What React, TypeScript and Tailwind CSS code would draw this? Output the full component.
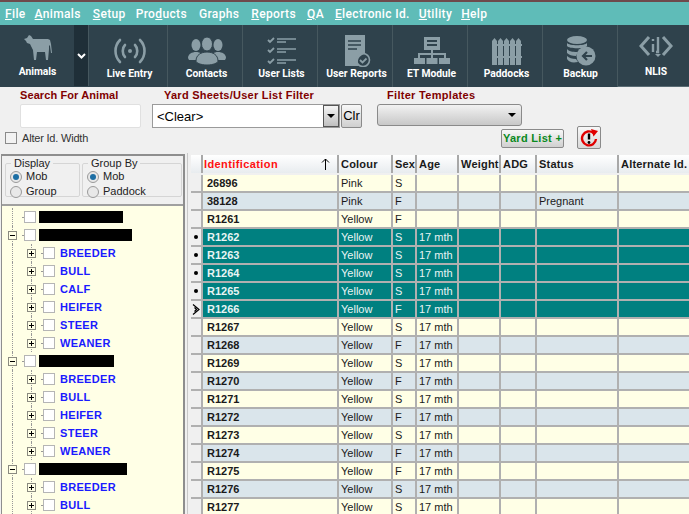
import React from "react";

const ICON = "#8b9ea6";

const Cow = () => (
  <svg width="28" height="25" viewBox="0 0 28 25" fill={ICON}>
    <path d="M0 4L3 3 5 0 7 1 9 4 24 4 26 5 27 9 28 18 27 18 26 11 25 10 25 14 24 25 22 25 21 17 13 17 12 25 10 25 9 15 6 9 3 8 2 6z" />
  </svg>
);
const Live = () => (
  <svg width="34" height="26" viewBox="0 0 34 26" fill="none" stroke={ICON} strokeWidth="2.6" strokeLinecap="round">
    <path d="M7 2C1 8 1 18 7 24" />
    <path d="M12 7C9 10 9 16 12 19" />
    <path d="M22 7C25 10 25 16 22 19" />
    <path d="M27 2C33 8 33 18 27 24" />
    <circle cx="17" cy="13" r="2" fill={ICON} stroke="none" />
  </svg>
);
const Contacts = () => (
  <svg width="38" height="28" viewBox="0 0 38 28" fill={ICON}>
    <ellipse cx="8" cy="8" rx="4.5" ry="6" />
    <ellipse cx="30" cy="8" rx="4.5" ry="6" />
    <path d="M0 21c0-4 4-6 8-6s7 2 7 6v2H1z" />
    <path d="M23 21c0-4 3-6 7-6s8 2 8 6l-1 2H24z" />
    <ellipse cx="19" cy="7" rx="5.5" ry="7" stroke="#2f424c" strokeWidth="1" />
    <path d="M8 24c0-6 5-9 11-9s11 3 11 9c0 2-5 4-11 4S8 26 8 24z" stroke="#2f424c" strokeWidth="1" />
  </svg>
);
const Lists = () => (
  <svg width="30" height="28" viewBox="0 0 30 28" fill="none" stroke={ICON} strokeWidth="1.6">
    <path d="M1 3l2 2 4-4M1 13l2 2 4-4M1 24l2 2 4-4" strokeWidth="1.8" />
    <path d="M10 2h19M10 5h9M10 12h19M10 15h9M10 23h19M10 26h9" />
  </svg>
);
const Reports = () => (
  <svg width="28" height="32" viewBox="0 0 28 32">
    <path d="M2 0h20v19a8 8 0 0 0-6 12H2z" fill={ICON} />
    <path d="M5 6h13M5 10h13M5 14h9" stroke="#2f424c" strokeWidth="1.5" />
    <circle cx="20" cy="25" r="6.5" fill="none" stroke={ICON} strokeWidth="1.6" />
    <path d="M17 25l2.5 2.5 4-4" fill="none" stroke={ICON} strokeWidth="1.8" />
  </svg>
);
const Et = () => (
  <svg width="36" height="28" viewBox="0 0 36 28" fill={ICON}>
    <path fillRule="evenodd" d="M10 0h16v13H10zM13 3v2h10V3zM13 7v2h10V7z" />
    <path d="M17 13h2v3h13v5h-2v-3H19v3h-2v-3H6v3H4v-5h13z" />
    <rect x="0" y="21" width="11" height="6" />
    <rect x="12.5" y="21" width="11" height="6" />
    <rect x="25" y="21" width="11" height="6" />
  </svg>
);
const Paddocks = () => (
  <svg width="30" height="28" viewBox="0 0 30 28" fill={ICON}>
    {[0, 6, 12, 18, 24].map((x) => (
      <path key={x} d={`M${x} 4l2.5-3 2.5 3v24h-5z`} />
    ))}
    <rect x="0" y="7" width="30" height="2" />
    <rect x="0" y="19" width="30" height="2" />
  </svg>
);
const Backup = () => (
  <svg width="30" height="30" viewBox="0 0 30 30">
    <ellipse cx="11" cy="4" rx="10" ry="4" fill={ICON} />
    <path d="M1 7c2 3 18 3 20 0v3c-2 3-18 3-20 0zM1 13c2 3 8 3 11 3l-2 4c-4 0-7-1-9-3zM1 20c2 2 5 3 9 3l2 3c-6 1-9 0-11-3z" fill={ICON} />
    <circle cx="20" cy="20" r="9.5" fill={ICON} />
    <path d="M26 20h-9M21 16l-4 4 4 4" fill="none" stroke="#2f424c" strokeWidth="2.2" />
  </svg>
);
const Nlis = () => (
  <svg width="34" height="24" viewBox="0 0 34 24" fill="none" stroke={ICON} strokeWidth="3">
    <path d="M10 3L2 12l8 9M24 3l8 9-8 9" />
    <path d="M14 10v8M14 5v2" strokeWidth="2.4" />
    <path d="M19 3v15h-2" strokeWidth="2.4" />
    <path d="M16 20h6l-3 3z" fill={ICON} stroke="none" />
  </svg>
);

const menu: [string, string, string, string][] = [
  ["", "F", "ile", ""],
  ["", "A", "nimals", "ml-[9px]"],
  ["", "S", "etup", "ml-[12px]"],
  ["Pro", "d", "ucts", "ml-[10px]"],
  ["Graphs", "", "", "ml-[12px]"],
  ["", "R", "eports", "ml-[12px]"],
  ["", "Q", "A", "ml-[11px]"],
  ["", "E", "lectronic Id.", "ml-[11px]"],
  ["", "U", "tility", "ml-[9px]"],
  ["", "H", "elp", "ml-[9px]"],
];

const tools: [string, React.ReactNode, string][] = [
  ["Live Entry", <Live />, "w-[79px] pl-[3px]"],
  ["Contacts", <Contacts />, "w-[75px] pl-[3px]"],
  ["User Lists", <Lists />, "w-[75px] pl-[3px]"],
  ["User Reports", <Reports />, "w-[75px] pl-[3px]"],
  ["ET Module", <Et />, "w-[75px] pl-[3px]"],
  ["Paddocks", <Paddocks />, "w-[75px] pl-[3px]"],
  ["Backup", <Backup />, "w-[75px] pl-[1px]"],
];

const Box = () => <div className="w-[12px] h-[12px] shrink-0 bg-white border border-[#b5b5b5]" />;

const Expander = ({ open }: { open?: boolean }) => (
  <div className="w-[9px] h-[9px] shrink-0 border border-[#8a8a80] bg-[#ffffe6] flex items-center justify-center relative">
    <div className="w-[5px] h-px bg-black" />
    {!open && <div className="absolute w-px h-[5px] bg-black" />}
  </div>
);

const Guide = ({ w, children, end }: { w: string; children?: React.ReactNode; end?: boolean }) => (
  <div className={`${w} h-full shrink-0 flex flex-col items-center justify-center relative`}>
    <div className={`absolute top-0 ${end ? "h-1/2" : "h-full"} border-l border-dotted border-[#999]`} />
    {children && <div className="relative">{children}</div>}
  </div>
);

const Root = ({ w, open, expand }: { w: string; open?: boolean; expand?: boolean }) => (
  <div className="h-[18px] flex items-center">
    <Guide w="w-[19px]">{expand && <Expander open={open} />}</Guide>
    <div className="w-[2px] border-t border-dotted border-[#999]" />
    <Box />
    <div className={`ml-[3px] h-[12px] bg-black ${w}`} />
  </div>
);

const Child = ({ name }: { name: string }) => (
  <div className="h-[18px] flex items-center">
    <Guide w="w-[19px]" />
    <Guide w="w-[19px]">
      <Expander />
    </Guide>
    <div className="w-[2px] border-t border-dotted border-[#999]" />
    <Box />
    <span className="ml-[5px] font-['Liberation_Sans',sans-serif] text-[11px] font-bold tracking-[0.3px] text-[#1a1aff]">{name}</span>
  </div>
);

const Radio = ({ on, label }: { on?: boolean; label: string }) => (
  <div className="flex items-center gap-[4px] h-[15px]">
    <div className="w-[12px] h-[12px] rounded-full border border-[#9a9a9a] bg-[#e8e8e8] flex items-center justify-center">
      {on && <div className="w-[6px] h-[6px] rounded-full bg-[#1c6ea4]" />}
    </div>
    <span className="text-[11px] text-[#222]">{label}</span>
  </div>
);

const Fieldset = ({ title, w, children }: { title: string; w: string; children: React.ReactNode }) => (
  <fieldset className={`${w} h-[39px] border border-[#d5d5d5] rounded-[2px] pl-[4px] mt-[-1px]`}>
    <legend className="text-[11px] leading-[11px] px-[3px] ml-[1px] text-[#222]">{title}</legend>
    {children}
  </fieldset>
);

const cols = [
  { name: "Identification", w: "w-[136px]" },
  { name: "Colour", w: "w-[54px]" },
  { name: "Sex", w: "w-[24px]" },
  { name: "Age", w: "w-[42px]" },
  { name: "Weight", w: "w-[42px]" },
  { name: "ADG", w: "w-[36px]" },
  { name: "Status", w: "w-[82px]" },
  { name: "Alternate Id.", w: "w-[73px]" },
];

const rows: [string, string, string, string, string, string][] = [
  ["26896", "Pink", "S", "", "", ""],
  ["38128", "Pink", "F", "", "Pregnant", ""],
  ["R1261", "Yellow", "F", "", "", ""],
  ["R1262", "Yellow", "S", "17 mth", "", "sel"],
  ["R1263", "Yellow", "S", "17 mth", "", "sel"],
  ["R1264", "Yellow", "S", "17 mth", "", "sel"],
  ["R1265", "Yellow", "S", "17 mth", "", "sel"],
  ["R1266", "Yellow", "F", "17 mth", "", "cur"],
  ["R1267", "Yellow", "S", "17 mth", "", ""],
  ["R1268", "Yellow", "F", "17 mth", "", ""],
  ["R1269", "Yellow", "S", "17 mth", "", ""],
  ["R1270", "Yellow", "F", "17 mth", "", ""],
  ["R1271", "Yellow", "S", "17 mth", "", ""],
  ["R1272", "Yellow", "F", "17 mth", "", ""],
  ["R1273", "Yellow", "S", "17 mth", "", ""],
  ["R1274", "Yellow", "F", "17 mth", "", ""],
  ["R1275", "Yellow", "F", "17 mth", "", ""],
  ["R1276", "Yellow", "S", "17 mth", "", ""],
  ["R1277", "Yellow", "S", "17 mth", "", ""],
];

export default function App() {
  return (
    <div className="w-[689px] h-[514px] overflow-hidden bg-[#f0f0f0] font-['Liberation_Sans',sans-serif] flex flex-col">
      <div className="h-[2px] shrink-0 bg-[#6e4a4c]" />
      {/* menu */}
      <div className="h-[23px] shrink-0 bg-[#5fbcb8] flex items-center pl-[5px] font-['Roboto',sans-serif] text-[12px] font-medium tracking-[0.35px] text-white">
        {menu.map(([a, u, b, m], i) => (
          <span key={i} className={`whitespace-nowrap ${m}`}>
            {a}
            {u && <span className="underline">{u}</span>}
            {b}
          </span>
        ))}
      </div>
      {/* toolbar */}
      <div className="h-[62px] shrink-0 bg-[#2f424c] flex font-['Roboto',sans-serif] text-[10.3px] font-bold text-white">
        <div className="w-[74px] h-[61px] flex flex-col items-center pt-[10px] pl-[1px]">
          <div className="h-[30px]">
            <Cow />
          </div>
          <span className="mt-[-1px]">Animals</span>
        </div>
        <div className="w-[15px] h-[61px] bg-[#1f2f38] border-r border-[#46585f] flex items-center justify-center">
          <svg width="9" height="6" viewBox="0 0 9 6" fill="none" stroke="white" strokeWidth="2">
            <path d="M1 1l3.5 3.5L8 1" />
          </svg>
        </div>
        {tools.map(([label, icon, w]) => (
          <div key={label} className={`${w} h-full flex flex-col items-center border-r border-[#46585f] pt-[9px] whitespace-nowrap`}>
            <div className="h-[33px] flex items-center justify-center">{icon}</div>
            <span className="mt-[-1px]">{label}</span>
          </div>
        ))}
        <div className="w-[71px] h-[62px] flex flex-col items-center pt-[9px] pl-[5px] border-b border-[#5a6c74]">
          <div className="h-[31px] flex items-start justify-center">
            <Nlis />
          </div>
          <span className="mt-[-1px]">NLIS</span>
        </div>
      </div>
      {/* filter */}
      <div className="h-[66px] shrink-0 flex pt-[2px] text-[11px] font-bold text-[#800000]">
        <div className="w-[152px] pl-[20px] flex flex-col">
          <span className="leading-[13px] tracking-[0.1px]">Search For Animal</span>
          <div className="mt-[2px] w-[121px] h-[24px] bg-white border border-[#e0e0e0] rounded-[2px]" />
          <div className="mt-[2px] ml-[-15px] flex items-center gap-[5px] font-normal tracking-[-0.2px] text-[11px] text-[#333]">
            <div className="w-[12px] h-[12px] bg-[#f2f2f2] border border-[#8a8a8a]" />
            Alter Id. Width
          </div>
        </div>
        <div className="w-[225px] flex flex-col">
          <span className="leading-[13px] pl-[12px] tracking-[0.25px]">Yard Sheets/User List Filter</span>
          <div className="mt-[2px] flex items-start">
            <div className="w-[188px] h-[24px] bg-white border border-[#9a9a9a] flex items-center justify-between font-normal text-[13px] text-black pl-[4px]">
              <span className="mt-[1px]">&lt;Clear&gt;</span>
              <div className="w-[16px] h-[22px] bg-gradient-to-b from-[#f5f5f5] to-[#c0c0c0] border border-[#555] flex items-center justify-center">
                <div className="border-x-[4px] border-x-transparent border-t-[4px] border-t-black" />
              </div>
            </div>
            <div className="ml-[1px] w-[21px] h-[24px] bg-gradient-to-b from-[#f8f8f8] to-[#cfcfcf] border border-[#8a8a8a] rounded-[2px] flex items-center justify-center font-normal text-[13px] text-black">
              Clr
            </div>
          </div>
        </div>
        <div className="flex flex-col">
          <span className="leading-[13px] pl-[10px] tracking-[0.3px]">Filter Templates</span>
          <div className="mt-[2px] w-[145px] h-[22px] bg-gradient-to-b from-[#f2f2f2] to-[#c8c8c8] border border-[#8a8a8a] rounded-[3px] flex items-center justify-end pr-[5px]">
            <div className="border-x-[4px] border-x-transparent border-t-[4px] border-t-black" />
          </div>
          <div className="ml-[124px] flex items-start">
            <div className="w-[63px] h-[19px] mt-[3px] bg-gradient-to-b from-[#f8f8f8] to-[#d0d0d0] border border-[#8a8a8a] rounded-[2px] flex items-center justify-center text-[11px] tracking-[0.3px] text-[#0a8a1e] whitespace-nowrap">
              Yard List +
            </div>
            <div className="ml-[13px] w-[24px] h-[23px] bg-gradient-to-b from-[#f8f8f8] to-[#d8d8d8] border border-[#8a8a8a] rounded-[2px] flex items-center justify-center">
              <svg width="20" height="19" viewBox="0 0 20 19" fill="none">
                <path d="M14.5 5A7 7 0 1 0 17 11" stroke="#e00000" strokeWidth="2.4" />
                <path d="M12 1l7 2-4.5 5.5z" fill="#e00000" />
                <path d="M10 5.5v6" stroke="black" strokeWidth="2.4" />
                <circle cx="10" cy="14.5" r="1.4" fill="black" />
              </svg>
            </div>
          </div>
        </div>
      </div>
      {/* body */}
      <div className="flex-1 flex min-h-0">
        {/* left */}
        <div className="w-[184px] shrink-0 ml-px border-t-2 border-r-2 border-l border-[#8e8e8e] mt-[1px] flex flex-col text-[11px] font-normal">
          <div className="h-[50px] shrink-0 flex gap-[2px] pl-[3px] pt-[3px] border-b-2 border-[#a0a0a0]">
            <Fieldset title="Display" w="w-[75px]">
              <Radio on label="Mob" />
              <Radio label="Group" />
            </Fieldset>
            <Fieldset title="Group By" w="w-[100px]">
              <Radio on label="Mob" />
              <Radio label="Paddock" />
            </Fieldset>
          </div>
          <div className="flex-1 bg-[#ffffe6] pt-[2px] pl-px overflow-hidden">
            <Root w="w-[84px]" />
            <Root w="w-[93px]" expand open />
            {["BREEDER", "BULL", "CALF", "HEIFER", "STEER", "WEANER"].map((n) => (
              <Child key={n} name={n} />
            ))}
            <Root w="w-[75px]" expand open />
            {["BREEDER", "BULL", "HEIFER", "STEER", "WEANER"].map((n) => (
              <Child key={n} name={n} />
            ))}
            <Root w="w-[88px]" expand open />
            {["BREEDER", "BULL"].map((n) => (
              <Child key={n} name={n} />
            ))}
          </div>
        </div>
        {/* grid */}
        <div className="ml-[2px] w-[502px] shrink-0 pt-[2px] pl-[3px] border-l border-[#c8c8c8] overflow-hidden">
          <div className="flex h-[20px] bg-gradient-to-b from-white to-[#e8ecef] border-b-2 border-[#f0f0f0]">
            <div className="w-[12px] shrink-0 border-r-2 border-[#a8a8a8]" />
            {cols.map((c, i) => (
              <div
                key={c.name}
                className={`${c.w} shrink-0 border-r-2 border-[#a8a8a8] flex items-center justify-between whitespace-nowrap text-[11px] font-bold ${i === 0 ? "text-[#ff1010] pl-[1px] tracking-[0.4px]" : "text-[#1a1a1a] pl-[2px] tracking-[0.2px]"}`}
              >
                {c.name}
                {i === 0 && (
                  <svg width="9" height="12" viewBox="0 0 9 12" fill="none" stroke="black" className="mr-[7px]">
                    <path d="M4.5 12V1M1 4.5L4.5 1 8 4.5" />
                  </svg>
                )}
              </div>
            ))}
          </div>
          {rows.map((r, i) => {
            const sel = r[5] !== "";
            const bg = sel ? "bg-[#008080] text-[#e8f4f4]" : i % 2 ? "bg-[#dae5eb] text-[#1a1a1a]" : "bg-[#ffffe6] text-[#1a1a1a]";
            const vals = [r[0], r[1], r[2], r[3], "", "", r[4], ""];
            return (
              <div key={r[0]} className="flex h-[18px]">
                <div className="w-[12px] shrink-0 border-r-2 border-b-2 border-[#b0b0b0] bg-[#f0f0f0] flex items-center justify-center">
                  {r[5] === "sel" && <div className="w-[4px] h-[4px] rounded-full bg-black" />}
                  {r[5] === "cur" && (
                    <svg width="9" height="11" viewBox="0 0 9 11" fill="none" stroke="black" strokeWidth="1.2">
                      <path d="M1 .5L7 5.5 1 10.5M2.5 3.5L4.5 5.5 2.5 7.5" />
                    </svg>
                  )}
                </div>
                {cols.map((c, j) => (
                  <div
                    key={c.name}
                    className={`${c.w} shrink-0 border-r-2 border-b-2 border-[#b0b0b0] ${bg} flex items-center whitespace-nowrap text-[11px] ${j === 0 ? "pl-[4px] font-bold" : "pl-[2px]"}`}
                  >
                    {vals[j]}
                  </div>
                ))}
              </div>
            );
          })}
        </div>
      </div>
    </div>
  );
}
